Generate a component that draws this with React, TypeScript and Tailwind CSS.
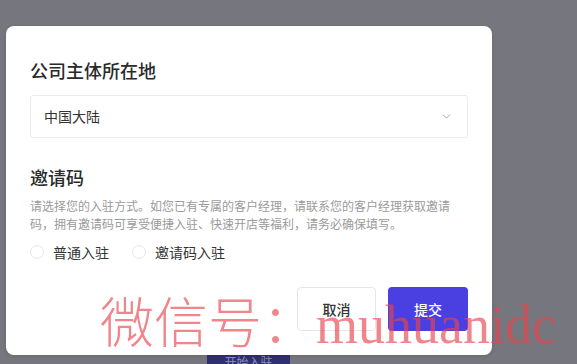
import { ChevronDown } from "lucide-react";

const cjk = "font-['Noto_Sans_CJK_SC',sans-serif]";

function Radio({ label }: { label: string }) {
  return (
    <label className="flex items-center gap-[9px] cursor-pointer">
      <span className="w-[14px] h-[14px] rounded-full border border-[#e6e6e6] bg-white" />
      <span className="text-[14px] leading-[20px] text-[#333]">{label}</span>
    </label>
  );
}

export default function App() {
  return (
    <div className={`relative w-[577px] h-[364px] overflow-hidden bg-[#76767e] ${cjk}`}>
      {/* page behind the mask */}
      <div className="pt-[354px] pl-[207px]">
        <div className="w-[83px] h-[30px] bg-[#2f306e] text-center text-[12px] leading-[16px] text-[#8e8fc0]">
          开始入驻
        </div>
      </div>

      {/* dialog */}
      <div className="absolute left-[6px] top-[26px] w-[486px] rounded-[8px] bg-white shadow-[0_1px_4px_rgba(0,0,0,0.12)] px-[24px] pt-[32px] pb-[24px]">
        <h2 className="text-[18px] leading-[24px] font-medium text-[#2a2a2a]">公司主体所在地</h2>

        <div className="mt-[13px] h-[43px] w-[438px] flex items-center justify-between rounded-[3px] border border-[#ebebeb] pl-[13px] pr-[14px]">
          <span className="text-[14px] text-[#333]">中国大陆</span>
          <ChevronDown size={13} strokeWidth={1.8} className="text-[#a0a0a0]" />
        </div>

        <h2 className="mt-[27px] text-[18px] leading-[24px] font-medium text-[#2a2a2a]">邀请码</h2>

        <p className="mt-[8px] max-w-[422px] text-[12px] leading-[18px] text-[#9a9a9a]">
          请选择您的入驻方式。如您已有专属的客户经理，请联系您的客户经理获取邀请码，拥有邀请码可享受便捷入驻、快速开店等福利，请务必确保填写。
        </p>

        <div className="mt-[9px] flex items-center gap-[23px]">
          <Radio label="普通入驻" />
          <Radio label="邀请码入驻" />
        </div>

        <div className="mt-[25px] flex justify-end gap-[12px]">
          <button className="w-[79px] h-[44px] rounded-[4px] border border-[#e6e6e6] bg-white text-[14px] font-medium text-[#333]">
            取消
          </button>
          <button className="w-[80px] h-[44px] rounded-[4px] bg-[#4a40e2] text-[14px] font-medium text-white">
            提交
          </button>
        </div>
      </div>

      {/* watermark */}
      <div className="pointer-events-none absolute left-[100px] top-[298px] whitespace-nowrap text-[54px] leading-none font-light text-[#e8434d]/65 font-['Liberation_Serif','Noto_Sans_CJK_SC',serif]">
        微信号：muhuanidc
      </div>
    </div>
  );
}
